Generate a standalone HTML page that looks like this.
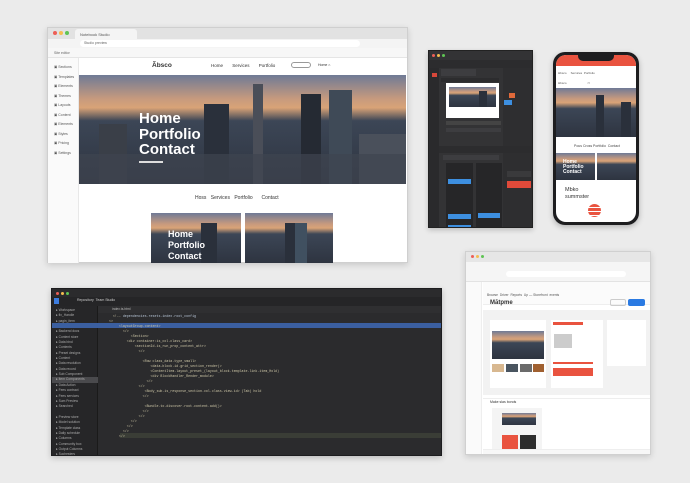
<!DOCTYPE html>
<html><head><style>
*{margin:0;padding:0;box-sizing:border-box}
body{width:690px;height:483px;background:#ebebeb;position:relative;overflow:hidden;font-family:"Liberation Sans",sans-serif}
.a{position:absolute}
.city{background:linear-gradient(180deg,#6f7a96 0%,#c79a7e 22%,#d9a377 30%,#3c4656 42%,#2e3440 100%);overflow:hidden}
.bld{position:absolute;bottom:0;background:#2a303b}
.d{position:absolute;border-radius:50%}
</style></head><body>

<!-- Browser 1 -->
<div class="a" style="left:47px;top:27px;width:361px;height:236px;background:#fff;border:1px solid #cfcfcf;box-shadow:0 2px 6px rgba(0,0,0,.15)">
 <div class="a" style="left:0;top:0;width:100%;height:11px;background:#e2e2e2"></div>
 <div class="d" style="left:5px;top:3px;width:4px;height:4px;background:#ed5f57"></div>
 <div class="d" style="left:11px;top:3px;width:4px;height:4px;background:#f5bd4f"></div>
 <div class="d" style="left:17px;top:3px;width:4px;height:4px;background:#5fc454"></div>
 <div class="a" style="left:27px;top:1px;width:62px;height:10px;background:#f4f4f4;border-radius:3px 3px 0 0;font-size:4px;color:#555;padding:3px 5px">Notebook Studio</div>
 <div class="a" style="left:0;top:11px;width:100%;height:9px;background:#f4f4f4"></div>
 <div class="a" style="left:32px;top:12px;width:280px;height:7px;background:#fff;border-radius:4px;font-size:3.5px;color:#666;padding:1px 4px">Studio preview</div>
 <div class="a" style="left:0;top:20px;width:100%;height:10px;background:#f7f7f7;border-bottom:1px solid #e5e5e5;font-size:3.5px;color:#666;padding:3px 6px">Site editor</div>
 <div class="a" style="left:0;top:30px;width:31px;height:205px;background:#fafafa;border-right:1px solid #e8e8e8"></div>
 <div class="a" style="left:6px;top:35px;font-size:3.5px;color:#555;line-height:9.5px">▣ Sections<br>▣ Templates<br>▣ Elements<br>▣ Themes<br>▣ Layouts<br>▣ Content<br>▣ Elements<br>▣ Styles<br>▣ Pricing<br>▣ Settings</div>
 <div class="a" style="left:104px;top:34px;font-size:6.5px;font-weight:bold;color:#333">Ãbsco</div>
 <div class="a" style="left:163px;top:35px;font-size:4.5px;color:#333;word-spacing:8px">Home Services Portfolio</div>
 <div class="a" style="left:243px;top:34px;width:20px;height:6px;border:1px solid #999;border-radius:4px"></div>
 <div class="a" style="left:270px;top:35px;font-size:3.5px;color:#333">Home ⌂</div>
 <div class="a city" style="left:31px;top:47px;width:327px;height:109px">
  <div class="bld" style="left:20px;width:28px;height:60px;background:#3a3f48"></div>
  <div class="bld" style="left:125px;width:25px;height:80px"></div>
  <div class="bld" style="left:174px;width:10px;height:100px;background:#4a4e58"></div>
  <div class="bld" style="left:222px;width:20px;height:90px;background:#252a33"></div>
  <div class="bld" style="left:250px;width:23px;height:94px;background:#3f4a57"></div>
  <div class="bld" style="left:280px;width:47px;height:50px;background:#4a505b"></div>
  <div class="bld" style="left:0;width:327px;height:30px;background:#3e4450;opacity:.7"></div>
  <div class="a" style="left:60px;top:36px;color:#fff;font-size:15px;font-weight:bold;line-height:15.5px">Home<br>Portfolio<br>Contact</div>
  <div class="a" style="left:60px;top:86px;width:24px;height:2px;background:#ddd"></div>
 </div>
 <div class="a" style="left:147px;top:167px;font-size:5px;color:#333;word-spacing:3px">Hoss Services Portfolio &nbsp;Contact</div>
 <div class="a city" style="left:103px;top:185px;width:90px;height:50px">
  <div class="bld" style="left:50px;width:16px;height:40px"></div>
  <div class="a" style="left:17px;top:16px;color:#fff;font-size:9px;font-weight:bold;line-height:11px">Home<br>Portfolio<br>Contact</div></div>
 <div class="a city" style="left:197px;top:185px;width:88px;height:50px">
  <div class="bld" style="left:40px;width:10px;height:40px"></div><div class="bld" style="left:50px;width:12px;height:40px;background:#405060"></div></div>
</div>

<!-- Dark editor window -->
<div class="a" style="left:428px;top:50px;width:105px;height:178px;background:#333335;border:1px solid #222;box-shadow:0 2px 5px rgba(0,0,0,.2);overflow:hidden">
 <div class="d" style="left:3px;top:3px;width:3px;height:3px;background:#ed5f57"></div>
 <div class="d" style="left:8px;top:3px;width:3px;height:3px;background:#f5bd4f"></div>
 <div class="d" style="left:13px;top:3px;width:3px;height:3px;background:#5fc454"></div>
 <div class="a" style="left:0;top:9px;width:105px;height:8px;background:#2c2c2e"></div>
 <div class="a" style="left:0;top:17px;width:10px;height:161px;background:#2a2a2c"></div>
 <div class="a" style="left:3px;top:22px;width:5px;height:4px;background:#d6473a"></div>
 <div class="a" style="left:12px;top:18px;width:35px;height:7px;background:#3d3d40"></div>
 <div class="a" style="left:12px;top:27px;width:58px;height:4px;background:#2c2c2e"></div>
 <div class="a" style="left:17px;top:32px;width:53px;height:35px;background:#fff"></div>
 <div class="a city" style="left:20px;top:36px;width:47px;height:20px"><div class="bld" style="left:30px;width:8px;height:16px"></div></div>
 <div class="a" style="left:17px;top:70px;width:55px;height:4px;background:#444"></div>
 <div class="a" style="left:17px;top:77px;width:55px;height:4px;background:#3d3d40"></div>
 <div class="a" style="left:74px;top:17px;width:31px;height:161px;background:#2e2e30"></div>
 <div class="a" style="left:75px;top:49px;width:8px;height:5px;background:#3d8fe0"></div>
 <div class="a" style="left:80px;top:42px;width:6px;height:5px;background:#e0693a"></div>
 <div class="a" style="left:10px;top:95px;width:95px;height:7px;background:#2c2c2e"></div>
 <div class="a" style="left:14px;top:104px;width:56px;height:5px;background:#3d3d40"></div>
 <div class="a" style="left:17px;top:112px;width:27px;height:65px;background:#262628"></div>
 <div class="a" style="left:47px;top:112px;width:26px;height:65px;background:#262628"></div>
 <div class="a" style="left:19px;top:128px;width:23px;height:5px;background:#3d8fe0"></div>
 <div class="a" style="left:19px;top:163px;width:23px;height:5px;background:#3d8fe0"></div>
 <div class="a" style="left:49px;top:162px;width:22px;height:5px;background:#3d8fe0"></div>
 <div class="a" style="left:19px;top:174px;width:23px;height:4px;background:#3d8fe0"></div>
 <div class="a" style="left:78px;top:120px;width:24px;height:6px;background:#3a3a3c"></div>
 <div class="a" style="left:78px;top:130px;width:24px;height:7px;background:#e04a3a"></div>
</div>

<!-- Phone -->
<div class="a" style="left:553px;top:52px;width:86px;height:173px;background:#1d1d1f;border-radius:12px;box-shadow:0 2px 6px rgba(0,0,0,.25)">
 <div class="a" style="left:3px;top:3px;width:80px;height:167px;background:#fff;border-radius:10px;overflow:hidden">
  <div class="a" style="left:0;top:0;width:80px;height:11px;background:#e9533f"></div>
  <div class="a" style="left:22px;top:0;width:36px;height:6px;background:#1d1d1f;border-radius:0 0 5px 5px"></div>
  <div class="a" style="left:2px;top:16px;font-size:3px;color:#555">Hbsco &nbsp; &nbsp; Services &nbsp;Portfolio</div>
  <div class="a" style="left:2px;top:26px;font-size:3px;color:#555">Hbsco &nbsp; &nbsp; &nbsp; &nbsp; &nbsp; &nbsp; &nbsp; &nbsp; &nbsp; &nbsp; &nbsp; &nbsp; ▭</div>
  <div class="a city" style="left:0;top:33px;width:80px;height:49px"><div class="bld" style="left:40px;width:8px;height:42px"></div><div class="bld" style="left:65px;width:10px;height:35px"></div></div>
  <div class="a" style="left:18px;top:89px;font-size:3.5px;color:#444">Pous Cross Portfolio &nbsp;Contact</div>
  <div class="a city" style="left:0;top:98px;width:39px;height:27px"><div class="a" style="left:7px;top:7px;color:#fff;font-size:5px;font-weight:bold;line-height:5px">Home<br>Portfolio<br>Contact</div></div>
  <div class="a city" style="left:41px;top:98px;width:39px;height:27px"></div>
  <div class="a" style="left:9px;top:132px;font-size:5.5px;color:#333;line-height:6.5px">Mbko<br>summster</div>
 </div>
 <div class="a" style="left:35px;top:152px;width:13px;height:13px;border-radius:50%;background:repeating-linear-gradient(180deg,#e9533f 0 3px,#fff 3px 4px)"></div>
</div>

<!-- Code editor -->
<div class="a" style="left:51px;top:288px;width:391px;height:168px;background:#2b2b2d;border:1px solid #1d1d1f;box-shadow:0 2px 6px rgba(0,0,0,.2);overflow:hidden">
 <div class="d" style="left:4px;top:3px;width:3px;height:3px;background:#ed5f57"></div>
 <div class="d" style="left:9px;top:3px;width:3px;height:3px;background:#f5bd4f"></div>
 <div class="d" style="left:14px;top:3px;width:3px;height:3px;background:#5fc454"></div>
 <div class="a" style="left:0;top:8px;width:391px;height:9px;background:#252527"></div>
 <div class="a" style="left:2px;top:9px;width:5px;height:6px;background:#3d7de0"></div>
 <div class="a" style="left:25px;top:9px;width:60px;height:6px;font-size:3.5px;color:#ccc">Repository &nbsp;Team Studio</div>
 <div class="a" style="left:0;top:17px;width:46px;height:151px;background:#262628;border-right:1px solid #1a1a1a"></div>
 <div class="a" style="left:0;top:88px;width:46px;height:6px;background:#4a4a4d"></div>
 <div class="a" style="left:4px;top:19px;font-size:3.3px;color:#aaa;line-height:5.35px">▸ Workspace<br>▸ fix_Handle<br>▸ pagin_item<br>▸ Template<br>▸ Backend docs<br>▸ Content store<br>▸ Data bind<br>▸ Contents<br>▸ Preset designs<br>▸ Content<br>▸ Data resolution<br>▸ Data record<br>▸ Sub Component<br>▸ Item Components<br>▸ Data Action<br>▸ Fees contract<br>▸ Fees services<br>▸ Sum Preview<br>▸ Searched<br><br>▸ Preview store<br>▸ Model solution<br>▸ Template class<br>▸ Daily schedule<br>▸ Columns<br>▸ Community box<br>▸ Output Columns<br>▸ Suchesters</div>
 <div class="a" style="left:46px;top:17px;width:345px;height:7px;background:#2f2f31"></div>
 <div class="a" style="left:60px;top:18px;font-size:3.3px;color:#bbb">index.ts.html</div>
 <div class="a" style="left:0;top:34px;width:391px;height:5px;background:#3b5fa0"></div>
 <div class="a" style="left:68px;top:144px;width:323px;height:5px;background:#3a3d36"></div>
 <pre class="a" style="left:55px;top:25px;font-family:'Liberation Mono',monospace;font-size:3.3px;line-height:5px;color:#cfc8a8">   &lt;!-- <span style="color:#b9c7d8">dependencies.resets.index.root_config</span>
 &lt;&gt;
      &lt;layoutGroup.content&gt;
        &lt;/&gt;
            &lt;Section&gt;
          &lt;div container:is_col.class_card&gt;
              &lt;sectionId.is_run_prop_content_attr&gt;
                &lt;/&gt;

                  &lt;Row class_data.type_small&gt;
                      &lt;data.block.id.grid_section_render(&gt;
                      &lt;ContentItem.layout_preset_(layout_block.template.link.item_Hold)
                      &lt;div BlockHandler_Render_module&gt;
                    &lt;/&gt;
                &lt;/&gt;
                   &lt;Body_sub.is_response_section.col.class.view.id&gt; (Tab) hold
                  &lt;/&gt;

                   &lt;Bundle.to.discover.root.content.add()&gt;
                  &lt;/&gt;
                &lt;/&gt;
            &lt;/&gt;
          &lt;/&gt;
        &lt;/&gt;
      &lt;/&gt;</pre>
</div>

<!-- Browser 4 -->
<div class="a" style="left:465px;top:251px;width:186px;height:204px;background:#fff;border:1px solid #d0d0d0;box-shadow:0 2px 6px rgba(0,0,0,.15);overflow:hidden">
 <div class="a" style="left:0;top:0;width:100%;height:10px;background:#e6e6e6"></div>
 <div class="d" style="left:5px;top:3px;width:3px;height:3px;background:#ed5f57"></div>
 <div class="d" style="left:10px;top:3px;width:3px;height:3px;background:#f5bd4f"></div>
 <div class="d" style="left:15px;top:3px;width:3px;height:3px;background:#5fc454"></div>
 <div class="a" style="left:0;top:10px;width:100%;height:20px;background:#f5f5f5;border-bottom:1px solid #e3e3e3"></div>
 <div class="a" style="left:40px;top:19px;width:120px;height:6px;background:#fff;border-radius:3px"></div>
 <div class="a" style="left:0;top:30px;width:16px;height:174px;background:#fafafa;border-right:1px solid #eee"></div>
 <div class="a" style="left:17px;top:30px;width:169px;height:22px;background:#fbfbfb;border-bottom:1px solid #eee;font-size:3.3px;color:#555;padding:11px 4px">Browse &nbsp;Driver &nbsp;Reports &nbsp;Up — Storefront &nbsp;events</div>
 <div class="a" style="left:24px;top:48px;font-size:6px;font-weight:bold;color:#333">Mātpme</div>
 <div class="a" style="left:144px;top:47px;width:16px;height:7px;border:1px solid #ccc;border-radius:2px"></div>
 <div class="a" style="left:162px;top:47px;width:17px;height:7px;background:#2a7ae2;border-radius:2px"></div>
 <div class="a" style="left:17px;top:58px;width:169px;height:85px;background:#f2f2f2"></div>
 <div class="a" style="left:24px;top:68px;width:56px;height:68px;background:#fff"></div>
 <div class="a city" style="left:26px;top:79px;width:52px;height:28px"></div>
 <div class="a" style="left:26px;top:112px;width:12px;height:8px;background:#d8b890"></div>
 <div class="a" style="left:40px;top:112px;width:12px;height:8px;background:#4a5560"></div>
 <div class="a" style="left:54px;top:112px;width:12px;height:8px;background:#6b6b6b"></div>
 <div class="a" style="left:67px;top:112px;width:11px;height:8px;background:#a06030"></div>
 <div class="a" style="left:85px;top:68px;width:52px;height:68px;background:#fff"></div>
 <div class="a" style="left:87px;top:70px;width:30px;height:3px;background:#e9533f"></div>
 <div class="a" style="left:88px;top:82px;width:18px;height:14px;background:#ccc"></div>
 <div class="a" style="left:87px;top:116px;width:40px;height:8px;background:#e9533f"></div>
 <div class="a" style="left:87px;top:110px;width:40px;height:2px;background:#e9533f"></div>
 <div class="a" style="left:141px;top:68px;width:39px;height:46px;background:#fff"></div>
 <div class="a" style="left:17px;top:146px;width:169px;height:52px;background:#fff;border-top:1px solid #eee"></div>
 <div class="a" style="left:24px;top:148px;font-size:3.5px;color:#333">Make slas bonds</div>
 <div class="a" style="left:26px;top:156px;width:50px;height:42px;background:#f4f4f4"></div>
 <div class="a city" style="left:36px;top:161px;width:34px;height:12px"></div>
 <div class="a" style="left:36px;top:183px;width:16px;height:14px;background:#e9533f"></div>
 <div class="a" style="left:54px;top:183px;width:16px;height:14px;background:#2c2c2c"></div>
 <div class="a" style="left:17px;top:197px;width:169px;height:7px;background:#f7f7f7;border-top:1px solid #eee"></div>
</div>
</body></html>
